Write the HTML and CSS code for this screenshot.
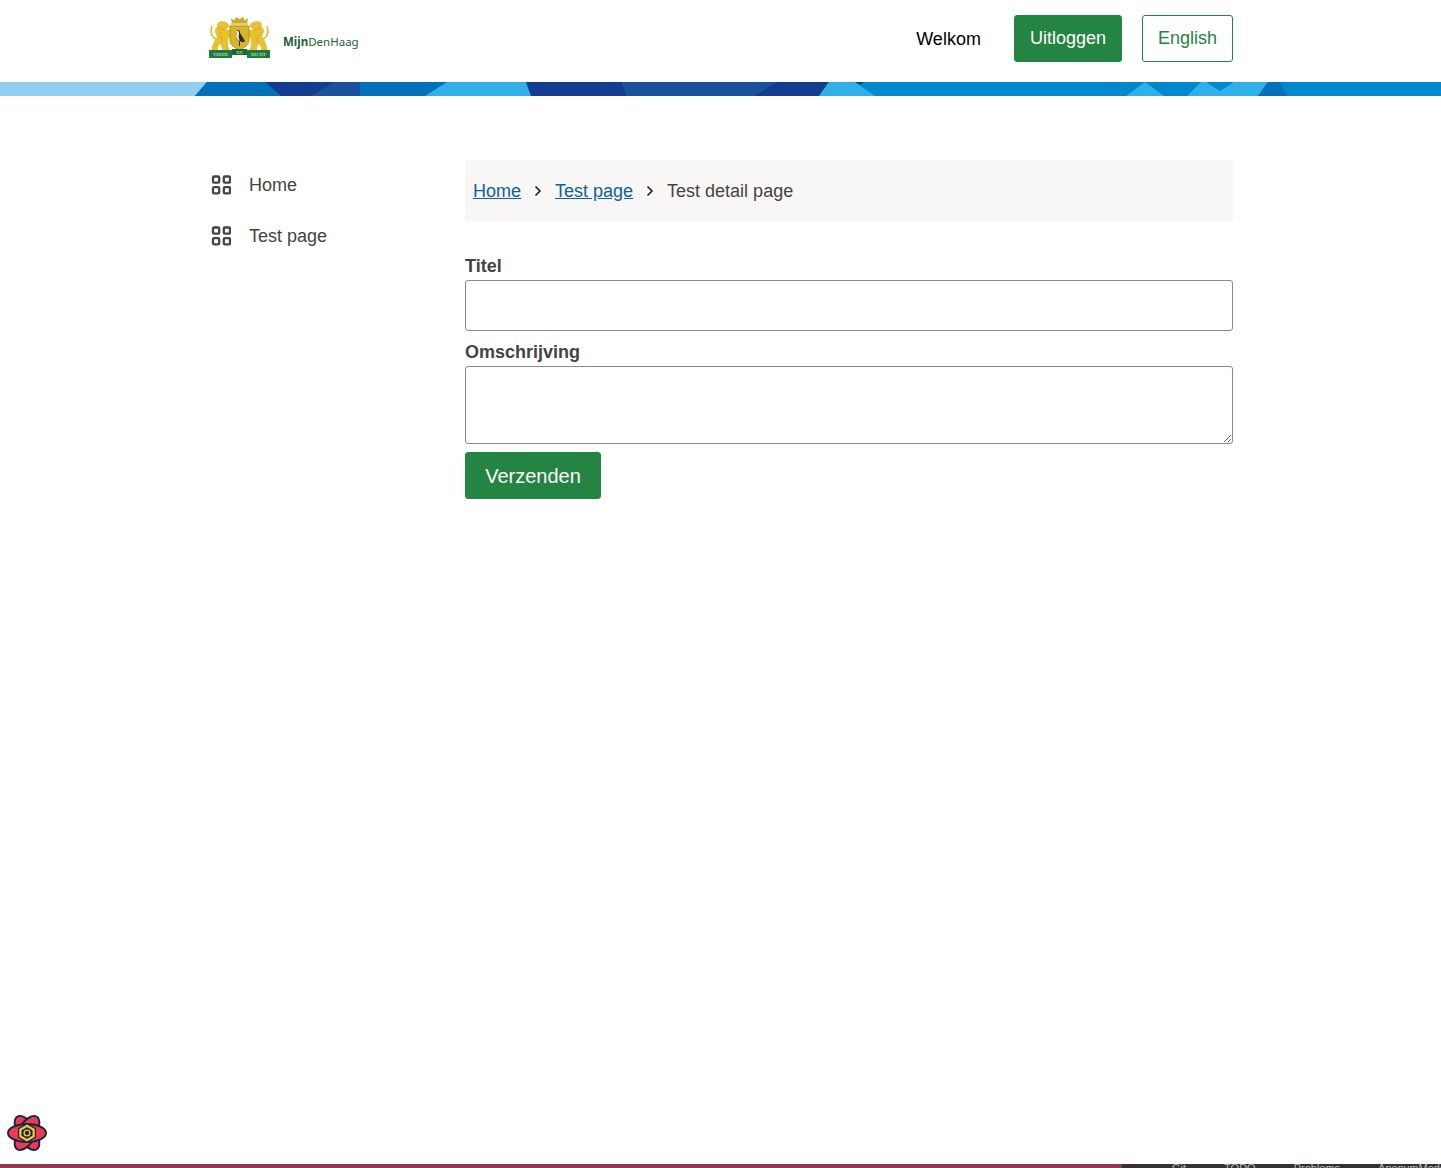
FILE: index.html
```html
<!DOCTYPE html>
<html lang="nl">
<head>
<meta charset="utf-8">
<title>MijnDenHaag</title>
<link rel="stylesheet" href="styles.css">
</head>
<body>
<div class="page">
  <header class="header">
    <div class="container header-row">
      <a class="logo" href="#">
        <svg class="crest" width="61" height="43" viewBox="0 0 61 43">
          <defs>
            <g id="lion">
              <path d="M7 22C2 20 1 14 3 9" fill="none" stroke="#dcb424" stroke-width="1.500"/>
              <path d="M14 5C10 4 8 7 9 10C5 12 7 17 9 20C6 23 4 27 3 33H8C8 30 10 27 12 26L14 33H20C18 29 18 25 19 21L22 18L21 14L16 13L20 9C18 6 16 5 14 5Z" fill="#e8c22e" stroke="#e8c22e" stroke-width="1.300"/>
              <path d="M9 10C11 12 13 12 16 13M12 26C13 23 13 20 11 18" fill="none" stroke="#b8941c" stroke-width=".6"/>
            </g>
          </defs>
          <use href="#lion"/>
          <use href="#lion" transform="translate(61 0) scale(-1 1)"/>
          <path d="M22 1L25 3.500L27 0L30.500 2L34 0L36 3.500L39 1L38 8H23Z" fill="#cfa826"/>
          <path d="M22 6H39V8.500H22Z" fill="#e6cf6a"/>
          <path d="M21 9H40V24C40 28 35 31 30.500 33C26 31 21 28 21 24Z" fill="#dcb526" stroke="#9c8019" stroke-width=".7"/>
          <path d="M27 14C29 12 31 13 31 16L36 24C35 26 32 25 31 24V29H30V24C27 23 26 19 28 16Z" fill="#2b2a24"/>
          <path d="M27 14C29 13 30 14 30 17C29 20 30 22 31 24C28 23 26 20 28 16Z" fill="#f6f3e8"/>
          <path d="M0 33H23V41H0ZM38 33H61V41H38Z" fill="#1f7a3c"/>
          <path d="M23 32H38V38H23Z" fill="#196a33"/>
          <text class="crest-text" x="11.500" y="39" text-anchor="middle">VREDE</text>
          <text class="crest-text" x="30.500" y="37" text-anchor="middle">EN</text>
          <text class="crest-text" x="49.500" y="39" text-anchor="middle">RECHT</text>
        </svg>
        <span class="logo-text"><b>Mijn</b>DenHaag</span>
      </a>
      <div class="header-actions">
        <span class="welcome">Welkom</span>
        <button class="btn btn-solid btn-logout" type="button">Uitloggen</button>
        <button class="btn btn-outline" type="button">English</button>
      </div>
    </div>
  </header>
  <svg class="band" viewBox="0 0 1441 14" width="1441" height="14" preserveAspectRatio="none" aria-hidden="true">
    <rect width="1441" height="14" fill="#0088cf"/>
    <path d="M0 0H207L195 14H0Z" fill="#93cdf0"/>
    <path d="M207 0H265L281 14H195Z" fill="#0070b8"/>
    <path d="M265 0H335L312 14H281Z" fill="#143d8f"/>
    <path d="M335 0H360V14H312Z" fill="#19529b"/>
    <path d="M360 0H447L425 14H360Z" fill="#0070b8"/>
    <path d="M447 0H526L531 14H425Z" fill="#2fb0e8"/>
    <path d="M526 0H622L627 14H531Z" fill="#143d8f"/>
    <path d="M622 0H776L754 14H627Z" fill="#19529b"/>
    <path d="M776 0H829L819 14H754Z" fill="#143d8f"/>
    <path d="M829 0H855L875 14H819Z" fill="#2fb0e8"/>
    <path d="M855 0H864L860 3Z" fill="#143d8f"/>
    <path d="M1145 0L1164 14H1126Z" fill="#2fb0e8"/>
    <path d="M1201 0H1206L1220 9L1234 0H1268L1258 14H1187Z" fill="#2fb0e8"/>
    <path d="M1268 0H1280L1287 14H1258Z" fill="#0070b8"/>
  </svg>
  <div class="container layout">
    <nav class="sidebar">
      <a class="nav-item" href="#">
        <svg class="nav-icon" viewBox="0 0 20 20" width="20" height="20"><g fill="none" stroke="#444" stroke-width="2.300"><rect x="2" y="1.500" width="6.200" height="6.200" rx="1.200"/><rect x="12.800" y="1.500" width="6.200" height="6.200" rx="1.200"/><rect x="2" y="12.200" width="6.200" height="6.200" rx="1.200"/><rect x="12.800" y="12.200" width="6.200" height="6.200" rx="1.200"/></g></svg>
        <span class="nav-label">Home</span>
      </a>
      <a class="nav-item" href="#">
        <svg class="nav-icon" viewBox="0 0 20 20" width="20" height="20"><g fill="none" stroke="#444" stroke-width="2.300"><rect x="2" y="1.500" width="6.200" height="6.200" rx="1.200"/><rect x="12.800" y="1.500" width="6.200" height="6.200" rx="1.200"/><rect x="2" y="12.200" width="6.200" height="6.200" rx="1.200"/><rect x="12.800" y="12.200" width="6.200" height="6.200" rx="1.200"/></g></svg>
        <span class="nav-label">Test page</span>
      </a>
    </nav>
    <main class="content">
      <ol class="breadcrumb">
        <li><a href="#">Home</a></li>
        <li class="sep"><svg viewBox="0 0 8 12" width="8" height="12"><path d="M1.500 1.500L6 6L1.500 10.500" fill="none" stroke="#222" stroke-width="1.700"/></svg></li>
        <li><a href="#">Test page</a></li>
        <li class="sep"><svg viewBox="0 0 8 12" width="8" height="12"><path d="M1.500 1.500L6 6L1.500 10.500" fill="none" stroke="#222" stroke-width="1.700"/></svg></li>
        <li>Test detail page</li>
      </ol>
      <form class="form">
        <label class="label" for="titel">Titel</label>
        <input class="field field-input" id="titel" type="text">
        <label class="label label-second" for="omschrijving">Omschrijving</label>
        <textarea class="field field-area" id="omschrijving"></textarea>
        <button class="btn btn-solid btn-submit" type="button">Verzenden</button>
      </form>
    </main>
  </div>
  <div class="statusbar">
    <div class="status-left"></div>
    <div class="status-right"><span>Git</span><span>TODO</span><span>Problems</span><span>AnonymMode</span></div>
  </div>
</div>
<button class="devtools" type="button" aria-label="Open devtools">
  <svg viewBox="0 0 44 42" width="42" height="40">
    <g fill="#f0394f" stroke="#10264a" stroke-width="2" stroke-linejoin="round">
      <ellipse cx="22" cy="21" rx="9.500" ry="20" transform="rotate(-30 22 21)"/>
      <ellipse cx="22" cy="21" rx="9.500" ry="20" transform="rotate(30 22 21)"/>
      <ellipse cx="22" cy="21" rx="9.500" ry="20" transform="rotate(90 22 21)"/>
    </g>
    <path d="M22 10.500L31.500 16V26L22 31.500L12.500 26V16Z" fill="#10264a"/>
    <path d="M22 13.500L29 17.500V24.500L22 28.500L15 24.500V17.500Z" fill="none" stroke="#f5c628" stroke-width="2.400"/>
    <circle cx="22" cy="21" r="3" fill="none" stroke="#f5c628" stroke-width="1.500"/>
  </svg>
</button>
</body>
</html>
```
FILE: styles.css
```css
* { box-sizing: border-box; }
html, body { margin: 0; padding: 0; }
body {
  font-family: "Liberation Sans", Arial, sans-serif;
  font-size: 18px;
  color: #444;
  background: #fff;
}
.page {
  min-height: 100vh;
  display: flex;
  flex-direction: column;
}
.container {
  width: 1024px;
  margin: 0 208px 0 209px;
}
.header { height: 82px; }
.header-row {
  height: 100%;
  display: flex;
  align-items: center;
  justify-content: space-between;
  padding-bottom: 5px;
}
.logo {
  display: flex;
  align-items: center;
  gap: 13px;
  text-decoration: none;
}
.crest { display: block; }
.crest-text {
  font-family: "Liberation Serif", serif;
  font-size: 4.500px;
  fill: #e4efe4;
}
.logo-text {
  font-family: "Noto Sans", sans-serif;
  font-size: 11.500px;
  color: #1d5f35;
  margin-top: 5px;
}
.header-actions {
  display: flex;
  align-items: center;
}
.welcome {
  color: #000;
  margin-right: 33px;
  padding-top: 1px;
}
.btn {
  font: inherit;
  height: 47px;
  padding-top: 1px;
  border-radius: 3px;
  cursor: pointer;
}
.btn-solid {
  background: #238541;
  border: 1px solid #238541;
  color: #fff;
}
.btn-outline {
  background: #fff;
  border: 1px solid #238541;
  color: #238541;
  padding-left: 15px;
  padding-right: 15px;
}
.btn-logout {
  padding-left: 15px;
  padding-right: 15px;
  margin-right: 20px;
}
.band {
  display: block;
  width: 100%;
  height: 14px;
  flex: none;
}
.layout {
  flex: 1;
  display: flex;
  padding-top: 64px;
}
.sidebar {
  width: 256px;
  flex: none;
  display: flex;
  flex-direction: column;
  gap: 27px;
  padding-top: 13px;
  padding-left: 2px;
}
.nav-item {
  display: flex;
  align-items: center;
  gap: 18px;
  height: 24px;
  color: #444;
  text-decoration: none;
}
.nav-icon { flex: none; }
.nav-label { padding-top: 1px; }
.content {
  flex: 1;
  min-width: 0;
}
.breadcrumb {
  list-style: none;
  margin: 0;
  padding: 1px 8px 0;
  height: 61px;
  display: flex;
  align-items: center;
  gap: 13px;
  background: #f8f7f5;
}
.breadcrumb a { color: #0b5fa5; }
.sep {
  display: flex;
  align-items: center;
  margin-top: -1px;
}
.form {
  display: flex;
  flex-direction: column;
  align-items: flex-start;
  padding-top: 33px;
}
.label {
  font-weight: 700;
  line-height: 24px;
  height: 26px;
}
.label-second { margin-top: 9px; }
.field {
  display: block;
  width: 100%;
  margin: 0;
  border: 1px solid #8a8a8a;
  border-radius: 3px;
  font: inherit;
  background: #fff;
}
.field-input { height: 51px; }
.field-area { height: 78px; resize: vertical; }
.btn-submit {
  margin-top: 8px;
  padding: 2px 19.200px 0;
  font-size: 20px;
}
.statusbar {
  height: 4px;
  flex: none;
  display: flex;
  overflow: hidden;
  background: #8b3b4b;
}
.status-left { width: 1122px; flex: none; }
.status-right {
  flex: 1;
  background: #333;
  color: #b5bbbf;
  font-size: 11px;
  line-height: 9px;
  display: flex;
  gap: 38px;
  padding-left: 50px;
  height: 4px;
  white-space: nowrap;
}
.devtools {
  position: fixed;
  left: 6px;
  bottom: 15px;
  width: 42px;
  height: 40px;
  padding: 0;
  border: 0;
  background: none;
  line-height: 0;
}
```
